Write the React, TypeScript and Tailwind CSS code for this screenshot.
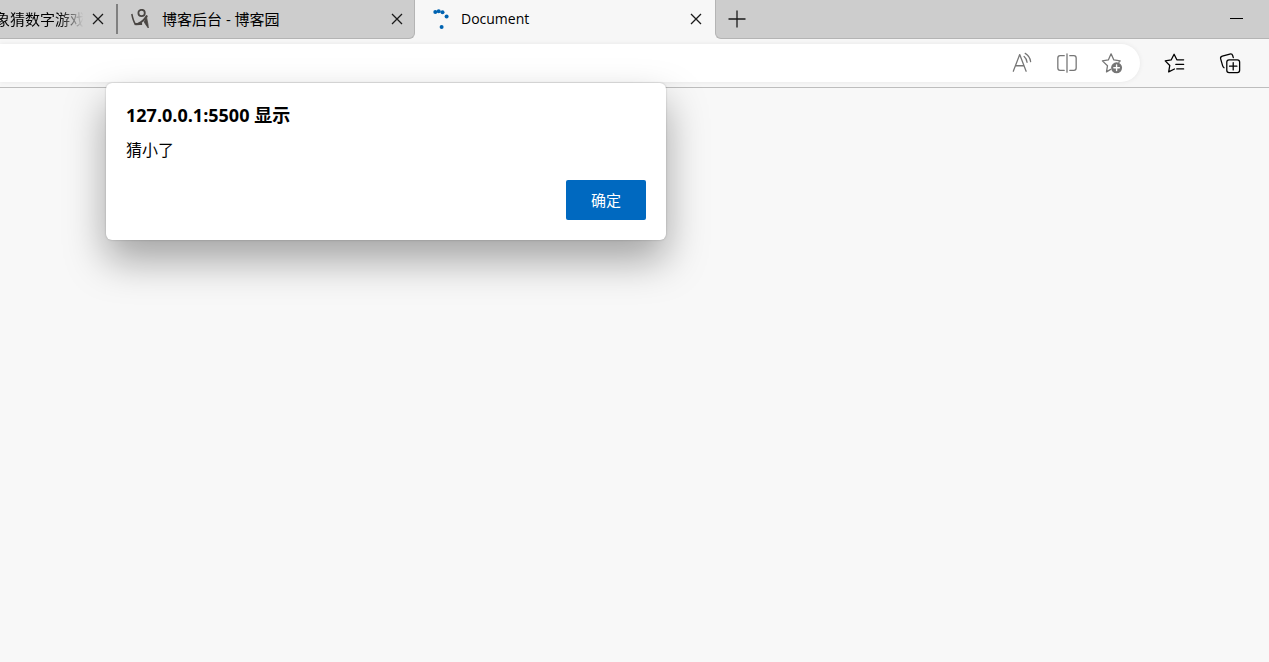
import type { ReactNode } from 'react';

export default function App() {
  return (
    <div className="relative min-h-screen overflow-hidden bg-[#f8f8f8] font-['Open_Sans','Noto_Sans_CJK_SC',sans-serif] text-black">
      <TabStrip />
      <Toolbar />
      <AlertDialog />
    </div>
  );
}

function TabStrip() {
  return (
    <header className="flex h-[39px] bg-[#f7f7f7] text-[15px] leading-5">
      {/* Background tabs */}
      <div className="flex w-[415px] shrink-0 items-center rounded-br-md border-r border-b border-[#b4b4b4] bg-[#cdcdcd]">
        <div className="flex w-[118px] items-center border-r-2 border-[#808080] py-0.5">
          <div className="flex w-[85px] shrink-0 justify-end overflow-hidden mask-r-from-70% mask-r-to-98% whitespace-nowrap">
            象猜数字游戏
          </div>
          <CloseButton label="关闭 象猜数字游戏" />
        </div>
        <div className="flex flex-1 items-center pr-1 pl-3">
          <BlogIcon />
          <span className="ml-3 flex-1 whitespace-nowrap">博客后台 - 博客园</span>
          <CloseButton label="关闭 博客后台" />
        </div>
      </div>

      {/* Active tab */}
      <div className="flex w-[300px] shrink-0 items-center pr-1.5 pb-px pl-4">
        <Spinner />
        <span className="ml-2.5 flex-1 text-sm leading-5">Document</span>
        <CloseButton label="关闭 Document" />
      </div>

      <div className="flex flex-1 items-center justify-between rounded-bl-md border-b border-l border-[#b4b4b4] bg-[#cdcdcd] pr-5 pl-3">
        <button type="button" aria-label="新建标签页">
          <svg className="size-[18px]" viewBox="0 0 18 18" stroke="#1a1a1a" strokeWidth="1.3">
            <path d="M9 .5v17M.5 9h17" />
          </svg>
        </button>
        <button type="button" aria-label="最小化" className="p-1.5">
          <svg className="h-3 w-[13px]" viewBox="0 0 13 12" stroke="#000" shapeRendering="crispEdges">
            <path d="M0 5.5h13" />
          </svg>
        </button>
      </div>
    </header>
  );
}

function CloseButton({ label }: { label: string }) {
  return (
    <button type="button" aria-label={label} className="flex size-[26px] shrink-0 items-center justify-center">
      <svg className="size-3" viewBox="0 0 12 12" fill="none" stroke="#1a1a1a" strokeWidth="1.3">
        <path d="M1 1l10 10M11 1L1 11" />
      </svg>
    </button>
  );
}

function BlogIcon() {
  return (
    <svg className="size-5 shrink-0" viewBox="0 0 20 20" fill="none" stroke="#4a4643">
      <circle cx="11.6" cy="4" r="3.2" strokeWidth="1.8" />
      <path d="M1.8 5c.8 4 1.7 7.4 3.5 10" strokeWidth="1.5" />
      <path d="M4.6 15c2 .2 5-.1 7.500-.2" strokeWidth="2.200" />
      <path d="M8.500 14.500c4-1.500 6-4 8.500-8" strokeWidth="2" />
      <path d="M16.800 6.500c-.6 3.500 1.400 7 1.500 12.500-1.500-2.200-3.300-4-4.300-6.500" fill="#4a4643" strokeWidth=".8" />
    </svg>
  );
}

function Spinner() {
  return (
    <svg className="size-5 shrink-0 overflow-visible" viewBox="0 0 20 20" fill="#0063b1">
      <circle cx="4.300" cy="3.100" r="2" />
      <circle cx="7.700" cy="2.300" r="2" />
      <circle cx="11.500" cy="3.300" r="2" />
      <circle cx="15.600" cy="7.500" r="2" />
      <circle cx="10.600" cy="17.900" r="2" />
    </svg>
  );
}

function Toolbar() {
  return (
    <div className="flex h-[49px] items-center border-b border-[#bdbdbd] bg-[#f7f7f7]">
      <div className="flex h-[38px] flex-1 items-center rounded-r-full bg-white pr-4 shadow-[0_0_5px_rgba(0,0,0,0.07)]">
        <input type="text" aria-label="地址栏" className="h-full min-w-0 flex-1 bg-transparent px-3 outline-none" />
        <div className="flex gap-[21px] text-[#767676]">
          <IconButton label="大声朗读">
            <path d="M2.500 21L9.500 2.800l7 18.200M4.800 15h9.400" />
            <path d="M14.300 4.800c1.700 1.400 2.900 3.500 3.200 6.400M15.500 1.500c3.400 2 5.400 5 5.900 9" />
          </IconButton>
          <IconButton label="拆分屏幕">
            <path d="M9 4H4.500A2.500 2.500 0 002 6.500v11A2.500 2.500 0 004.500 20H9M15 4h4.500A2.500 2.500 0 0122 6.500v11a2.500 2.500 0 01-2.500 2.500H15M12 2v20" />
          </IconButton>
          <IconButton label="添加到收藏夹">
            <path d="M10.500 19l-4.500 2.700 1.100-6.800L1.500 9.700l6.500-1L11 2l3 6.700 7 1-1.500 1.500" />
            <circle cx="17" cy="17.200" r="6" fill="currentColor" stroke="none" />
            <path d="M17 14.200v6M14 17.200h6" stroke="#fff" strokeWidth="1.500" />
          </IconButton>
        </div>
      </div>
      <div className="flex gap-8 pr-[27px] pl-[22px]">
        <IconButton label="收藏夹">
          <path d="M12.500 18.500l-6.300 3.200 1.200-7-5-5 6.500-1 3.200-6.200 3 6h7.400M14 13.500h8.500M15 18.500h7.500" />
        </IconButton>
        <IconButton label="集锦">
          <rect x="8.500" y="8.500" width="14" height="14" rx="2.500" />
          <path d="M15.500 11.500v8M11.500 15.500h8M5.500 17.200c-.8-.5-1.200-1-1.500-2L1.800 7.500c-.4-1.700.4-2.700 1.800-3.100l8.200-2.200c1.600-.4 2.700.2 3.100 1.600l.7 2.400" />
        </IconButton>
      </div>
    </div>
  );
}

function IconButton({ label, children }: { label: string; children: ReactNode }) {
  return (
    <button type="button" aria-label={label} className="flex size-6 items-center justify-center">
      <svg
        className="size-[22px]"
        viewBox="0 0 24 24"
        fill="none"
        stroke="currentColor"
        strokeWidth="1.400"
        strokeLinecap="round"
        strokeLinejoin="round"
      >
        {children}
      </svg>
    </button>
  );
}

function AlertDialog() {
  return (
    <div
      role="alertdialog"
      aria-labelledby="alert-title"
      aria-describedby="alert-message"
      className="absolute top-[83px] left-[106px] w-[560px] rounded-md bg-white p-5 shadow-[0_0_2px_rgba(0,0,0,0.25),0_20px_40px_rgba(0,0,0,0.35)]"
    >
      <h1 id="alert-title" className="text-lg leading-6 font-bold">
        127.0.0.1:5500 显示
      </h1>
      <p id="alert-message" className="mt-[13px] text-base leading-5">
        猜小了
      </p>
      <div className="mt-5 flex justify-end">
        <button type="button" className="h-10 w-20 rounded-xs bg-[#0069c0] text-[15px] text-white">
          确定
        </button>
      </div>
    </div>
  );
}
